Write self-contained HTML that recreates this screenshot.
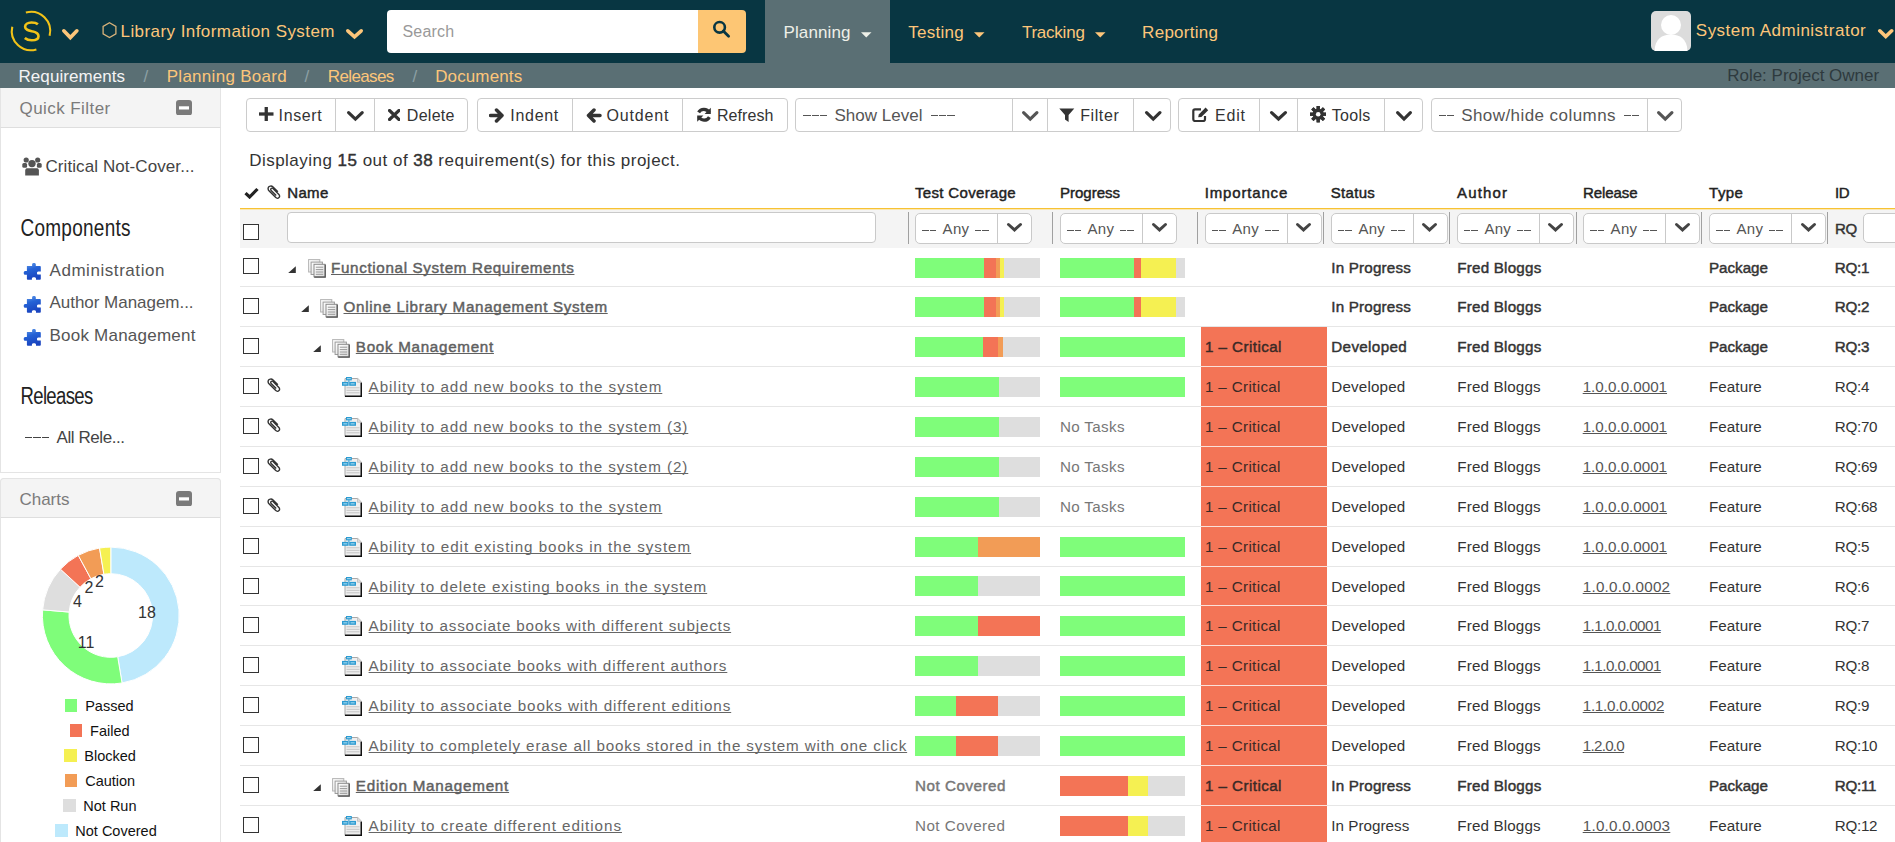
<!DOCTYPE html><html><head><meta charset="utf-8"><style>
html,body{margin:0;padding:0;}
body{width:1895px;height:842px;overflow:hidden;position:relative;background:#fff;font-family:"Liberation Sans",sans-serif;}
.a{position:absolute;display:block;}
.t{position:absolute;white-space:nowrap;line-height:1;}
.u{text-decoration:underline;text-underline-offset:1.3px;text-decoration-skip-ink:none;}
</style></head><body>

<div class="a" style="left:0.00px;top:0.00px;width:1895.00px;height:63.00px;background:#083642"></div>
<svg class="a" style="left:8.00px;top:8.00px" width="46" height="46" viewBox="0 0 46 46">
<path d="M 17.87 4.5 A 19.2 19.2 0 0 1 41.6 27.7" fill="none" stroke="#f2c318" stroke-width="2.1"/>
<path d="M 4.28 18.7 A 19.2 19.2 0 0 0 28.4 41.4" fill="none" stroke="#f2c318" stroke-width="2.1"/>
<path d="M 29.9 16.3 C 28.5 15 26 14.5 23.5 14.5 C 19.5 14.5 17.1 16.5 17.1 18.8 C 17.1 22 20.5 22.6 24 23.3 C 28 24 30.5 25 30.5 28.2 C 30.5 31 28 32.3 23.7 32.3 C 20.5 32.3 18.5 31.5 16.8 30" fill="none" stroke="#f2c318" stroke-width="2.6"/>
</svg>
<svg class="a" style="left:61.30px;top:27.50px" width="18.7" height="13.1" viewBox="0 0 18.7 13.1"><polyline points="2.80,2.80 9.35,9.56 15.90,2.80" fill="none" stroke="#fdc67a" stroke-width="3.60" stroke-linecap="round" stroke-linejoin="miter" stroke-miterlimit="3"/></svg>
<svg class="a" style="left:101.00px;top:21.00px" width="17" height="19" viewBox="0 0 17 19"><polygon points="8.5,1.7 14.9,5.4 14.9,12.8 8.5,16.5 2.1,12.8 2.1,5.4" fill="none" stroke="#d8b27a" stroke-width="1.3"/></svg>
<div class="t " style="left:120.50px;top:23.11px;font-size:17.00px;color:#fdc67a;letter-spacing:0.434px;">Library Information System</div>
<svg class="a" style="left:345.00px;top:28.00px" width="19" height="12.3" viewBox="0 0 19 12.3"><polyline points="2.80,2.80 9.50,8.76 16.20,2.80" fill="none" stroke="#fdc67a" stroke-width="3.60" stroke-linecap="round" stroke-linejoin="miter" stroke-miterlimit="3"/></svg>
<div class="a" style="left:387.00px;top:10.00px;width:311.00px;height:43.00px;background:#fff;border-radius:4px 0 0 4px"></div>
<div class="a" style="left:698.00px;top:10.00px;width:48.00px;height:43.00px;background:#fdc674;border-radius:0 4px 4px 0"></div>
<div class="t " style="left:402.50px;top:24.46px;font-size:16.00px;color:#999;letter-spacing:0.176px;">Search</div>
<svg class="a" style="left:711.00px;top:19.00px" width="22" height="21" viewBox="0 0 22 21"><circle cx="8.6" cy="8.3" r="5.3" fill="none" stroke="#083642" stroke-width="2.6"/><line x1="12.3" y1="12" x2="17.6" y2="17.3" stroke="#083642" stroke-width="2.8" stroke-linecap="round"/></svg>
<div class="a" style="left:765.00px;top:0.00px;width:125.00px;height:63.00px;background:#5a6f74"></div>
<div class="t " style="left:783.50px;top:24.11px;font-size:17.00px;color:#eef0e8;letter-spacing:0.124px;">Planning</div>
<svg class="a" style="left:860.50px;top:32.00px" width="11" height="6" viewBox="0 0 11 6"><polygon points="0,0.3 10.5,0.3 5.25,5.5" fill="#eef0e8"/></svg>
<div class="t " style="left:908.30px;top:24.11px;font-size:17.00px;color:#fdc67a;letter-spacing:0.268px;">Testing</div>
<svg class="a" style="left:973.50px;top:32.00px" width="11" height="6" viewBox="0 0 11 6"><polygon points="0,0.3 10.5,0.3 5.25,5.5" fill="#fdc67a"/></svg>
<div class="t " style="left:1021.90px;top:24.11px;font-size:17.00px;color:#fdc67a;letter-spacing:-0.229px;">Tracking</div>
<svg class="a" style="left:1094.50px;top:32.00px" width="11" height="6" viewBox="0 0 11 6"><polygon points="0,0.3 10.5,0.3 5.25,5.5" fill="#fdc67a"/></svg>
<div class="t " style="left:1142.10px;top:24.11px;font-size:17.00px;color:#fdc67a;letter-spacing:0.277px;">Reporting</div>
<svg class="a" style="left:1651.00px;top:11.00px" width="40" height="40" viewBox="0 0 40 40"><rect x="0" y="0" width="40" height="40" rx="5" fill="#dcdcdc"/><circle cx="20" cy="14" r="10" fill="#fff"/><path d="M 3.5 40 C 4 28 11 23.5 20 23.5 C 29 23.5 36 28 36.5 40 Z" fill="#fff"/></svg>
<div class="t " style="left:1695.80px;top:21.81px;font-size:17.00px;color:#fdc67a;letter-spacing:0.492px;">System Administrator</div>
<svg class="a" style="left:1876.50px;top:28.20px" width="17.5" height="12.1" viewBox="0 0 17.5 12.1"><polyline points="2.80,2.80 8.75,8.56 14.70,2.80" fill="none" stroke="#fdc67a" stroke-width="3.60" stroke-linecap="round" stroke-linejoin="miter" stroke-miterlimit="3"/></svg>
<div class="a" style="left:0.00px;top:63.00px;width:1895.00px;height:25.00px;background:#5a6f74"></div>
<div class="t " style="left:18.50px;top:67.61px;font-size:17.00px;color:#f4f4f4;letter-spacing:0.069px;">Requirements</div>
<div class="t " style="left:143.50px;top:67.61px;font-size:17.00px;color:#8da0a5;">/</div>
<div class="t " style="left:166.70px;top:67.61px;font-size:17.00px;color:#fdc67a;letter-spacing:0.286px;">Planning Board</div>
<div class="t " style="left:304.50px;top:67.61px;font-size:17.00px;color:#8da0a5;">/</div>
<div class="t " style="left:327.80px;top:67.61px;font-size:17.00px;color:#fdc67a;letter-spacing:-0.627px;">Releases</div>
<div class="t " style="left:412.50px;top:67.61px;font-size:17.00px;color:#8da0a5;">/</div>
<div class="t " style="left:435.20px;top:67.61px;font-size:17.00px;color:#fdc67a;letter-spacing:0.123px;">Documents</div>
<div class="t " style="left:1727.20px;top:67.31px;font-size:17.00px;color:#2e3a3e;letter-spacing:-0.008px;">Role: Project Owner</div>
<div class="a" style="left:0.00px;top:88.00px;width:219.00px;height:384.00px;border:1px solid #e4e4e4;border-top:none;box-sizing:content-box;background:#fff"></div>
<div class="a" style="left:0.00px;top:88.00px;width:221.00px;height:40.00px;background:#f4f4f4;border-bottom:1px solid #dedede;box-sizing:border-box;border-left:1px solid #e4e4e4;border-right:1px solid #e4e4e4"></div>
<div class="t " style="left:19.50px;top:99.61px;font-size:17.00px;color:#7b7b7b;letter-spacing:0.435px;">Quick Filter</div>
<svg class="a" style="left:176.00px;top:99.80px" width="16" height="15.5" viewBox="0 0 16 15.5"><rect x="0" y="0" width="16" height="15.5" rx="3" fill="#7a7a7a"/><rect x="3" y="6.3" width="10" height="3.2" fill="#fff"/></svg>
<svg class="a" style="left:21.00px;top:155.00px" width="22" height="22" viewBox="0 0 22 22"><g fill="#555">
<circle cx="5.2" cy="5" r="2.6"/><circle cx="16.7" cy="5" r="2.6"/>
<rect x="1.3" y="7.9" width="4.8" height="4.8" rx="1.5"/><rect x="15.9" y="7.9" width="4.8" height="4.8" rx="1.5"/>
<circle cx="11" cy="8.6" r="3.7"/>
<path d="M 4.2 20.6 L 4.2 15.5 C 4.2 13.9 5.2 13.3 6.8 13.3 L 15.3 13.3 C 16.9 13.3 17.9 13.9 17.9 15.5 L 17.9 20.6 Z"/>
</g></svg>
<div class="t " style="left:45.50px;top:158.31px;font-size:17.00px;color:#444;letter-spacing:0.081px;">Critical Not-Cover...</div>
<div class="t " style="left:20.50px;top:219.92px;font-size:19.00px;color:#222;letter-spacing:0.252px;transform:scaleY(1.22);transform-origin:0 16.08px;">Components</div>
<svg class="a" style="left:22.50px;top:262.00px" width="20" height="20" viewBox="0 0 20 20"><defs><linearGradient id="pg" x1="0" y1="0" x2="0.3" y2="1"><stop offset="0" stop-color="#6aa0ea"/><stop offset="0.45" stop-color="#2563d6"/><stop offset="1" stop-color="#1a45c0"/></linearGradient></defs>
<path fill="url(#pg)" d="M 3.9 3.9 L 9.1 3.9 L 9.1 2.2 C 9.1 0.6 12.8 0.6 12.8 2.2 L 12.8 3.9 L 16.9 3.9 C 17.5 3.9 17.8 4.2 17.8 4.8 L 17.8 9.4 L 15.2 9.4 C 13.6 9.4 13.6 12.6 15.2 12.6 L 17.8 12.6 L 17.8 17 C 17.8 17.6 17.5 17.8 16.9 17.8 L 13 17.8 L 13 16.5 C 13 14.8 8.9 14.8 8.9 16.5 L 8.9 17.8 L 4.8 17.8 C 4.2 17.8 3.9 17.6 3.9 17 L 3.9 12.8 L 2.2 12.8 C 0.2 12.8 0.2 9 2.2 9 L 3.9 9 Z"/></svg>
<div class="t " style="left:49.50px;top:261.61px;font-size:17.00px;color:#555;letter-spacing:0.555px;">Administration</div>
<svg class="a" style="left:22.50px;top:295.00px" width="20" height="20" viewBox="0 0 20 20"><defs><linearGradient id="pg" x1="0" y1="0" x2="0.3" y2="1"><stop offset="0" stop-color="#6aa0ea"/><stop offset="0.45" stop-color="#2563d6"/><stop offset="1" stop-color="#1a45c0"/></linearGradient></defs>
<path fill="url(#pg)" d="M 3.9 3.9 L 9.1 3.9 L 9.1 2.2 C 9.1 0.6 12.8 0.6 12.8 2.2 L 12.8 3.9 L 16.9 3.9 C 17.5 3.9 17.8 4.2 17.8 4.8 L 17.8 9.4 L 15.2 9.4 C 13.6 9.4 13.6 12.6 15.2 12.6 L 17.8 12.6 L 17.8 17 C 17.8 17.6 17.5 17.8 16.9 17.8 L 13 17.8 L 13 16.5 C 13 14.8 8.9 14.8 8.9 16.5 L 8.9 17.8 L 4.8 17.8 C 4.2 17.8 3.9 17.6 3.9 17 L 3.9 12.8 L 2.2 12.8 C 0.2 12.8 0.2 9 2.2 9 L 3.9 9 Z"/></svg>
<div class="t " style="left:49.50px;top:294.31px;font-size:17.00px;color:#555;letter-spacing:-0.031px;">Author Managem...</div>
<svg class="a" style="left:22.50px;top:328.00px" width="20" height="20" viewBox="0 0 20 20"><defs><linearGradient id="pg" x1="0" y1="0" x2="0.3" y2="1"><stop offset="0" stop-color="#6aa0ea"/><stop offset="0.45" stop-color="#2563d6"/><stop offset="1" stop-color="#1a45c0"/></linearGradient></defs>
<path fill="url(#pg)" d="M 3.9 3.9 L 9.1 3.9 L 9.1 2.2 C 9.1 0.6 12.8 0.6 12.8 2.2 L 12.8 3.9 L 16.9 3.9 C 17.5 3.9 17.8 4.2 17.8 4.8 L 17.8 9.4 L 15.2 9.4 C 13.6 9.4 13.6 12.6 15.2 12.6 L 17.8 12.6 L 17.8 17 C 17.8 17.6 17.5 17.8 16.9 17.8 L 13 17.8 L 13 16.5 C 13 14.8 8.9 14.8 8.9 16.5 L 8.9 17.8 L 4.8 17.8 C 4.2 17.8 3.9 17.6 3.9 17 L 3.9 12.8 L 2.2 12.8 C 0.2 12.8 0.2 9 2.2 9 L 3.9 9 Z"/></svg>
<div class="t " style="left:49.50px;top:327.21px;font-size:17.00px;color:#555;letter-spacing:0.229px;">Book Management</div>
<div class="t " style="left:20.50px;top:388.54px;font-size:18.50px;color:#222;letter-spacing:-0.635px;transform:scaleY(1.25);transform-origin:0 15.66px;">Releases</div>
<div class="a" style="left:24.70px;top:436.80px;width:7.57px;height:1.40px;background:#444"></div>
<div class="a" style="left:33.27px;top:436.80px;width:7.57px;height:1.40px;background:#444"></div>
<div class="a" style="left:41.83px;top:436.80px;width:7.57px;height:1.40px;background:#444"></div>
<div class="t " style="left:56.50px;top:428.61px;font-size:17.00px;color:#444;letter-spacing:-0.426px;">All Rele...</div>
<div class="a" style="left:0.00px;top:478.00px;width:219.00px;height:400.00px;border:1px solid #e4e4e4;box-sizing:content-box;background:#fff;border-radius:4px 4px 0 0"></div>
<div class="a" style="left:0.00px;top:478.00px;width:221.00px;height:40.00px;background:#f4f4f4;box-sizing:border-box;border:1px solid #e4e4e4;border-bottom-color:#dedede;border-radius:4px 4px 0 0"></div>
<div class="t " style="left:19.50px;top:491.01px;font-size:17.00px;color:#7b7b7b;letter-spacing:-0.030px;">Charts</div>
<svg class="a" style="left:176.00px;top:490.70px" width="16" height="15.5" viewBox="0 0 16 15.5"><rect x="0" y="0" width="16" height="15.5" rx="3" fill="#7a7a7a"/><rect x="3" y="6.3" width="10" height="3.2" fill="#fff"/></svg>
<svg class="a" style="left:0;top:0" width="221" height="842" viewBox="0 0 221 842"><path d="M 110.80 547.10 A 68.4 68.4 0 0 1 122.06 682.97 L 117.68 656.73 A 41.8 41.8 0 0 0 110.80 573.70 Z" fill="#bde9fc" stroke="#fff" stroke-width="1"/><path d="M 122.06 682.97 A 68.4 68.4 0 0 1 42.63 609.85 L 69.14 612.05 A 41.8 41.8 0 0 0 117.68 656.73 Z" fill="#7ffd7a" stroke="#fff" stroke-width="1"/><path d="M 42.63 609.85 A 68.4 68.4 0 0 1 60.48 569.17 L 80.05 587.19 A 41.8 41.8 0 0 0 69.14 612.05 Z" fill="#dedede" stroke="#fff" stroke-width="1"/><path d="M 60.48 569.17 A 68.4 68.4 0 0 1 78.25 555.34 L 90.91 578.74 A 41.8 41.8 0 0 0 80.05 587.19 Z" fill="#f37456" stroke="#fff" stroke-width="1"/><path d="M 78.25 555.34 A 68.4 68.4 0 0 1 99.54 548.03 L 103.92 574.27 A 41.8 41.8 0 0 0 90.91 578.74 Z" fill="#f29c56" stroke="#fff" stroke-width="1"/><path d="M 99.54 548.03 A 68.4 68.4 0 0 1 110.80 547.10 L 110.80 573.70 A 41.8 41.8 0 0 0 103.92 574.27 Z" fill="#f5f052" stroke="#fff" stroke-width="1"/></svg>
<div class="t " style="left:138.00px;top:605.26px;font-size:16.00px;color:#333;">18</div>
<div class="t " style="left:77.70px;top:634.66px;font-size:16.00px;color:#333;">11</div>
<div class="t " style="left:73.05px;top:594.26px;font-size:16.00px;color:#333;">4</div>
<div class="t " style="left:84.55px;top:580.06px;font-size:16.00px;color:#333;">2</div>
<div class="t " style="left:94.95px;top:574.26px;font-size:16.00px;color:#333;">2</div>
<div class="a" style="left:64.90px;top:699.00px;width:12.50px;height:12.50px;background:#7ffd7a"></div>
<div class="t " style="left:85.20px;top:699.43px;font-size:14.50px;color:#111;">Passed</div>
<div class="a" style="left:69.80px;top:724.00px;width:12.50px;height:12.50px;background:#f37456"></div>
<div class="t " style="left:90.10px;top:724.43px;font-size:14.50px;color:#111;">Failed</div>
<div class="a" style="left:64.00px;top:749.00px;width:12.50px;height:12.50px;background:#f5f052"></div>
<div class="t " style="left:84.30px;top:749.43px;font-size:14.50px;color:#111;">Blocked</div>
<div class="a" style="left:64.90px;top:774.00px;width:12.50px;height:12.50px;background:#f29c56"></div>
<div class="t " style="left:85.20px;top:774.43px;font-size:14.50px;color:#111;">Caution</div>
<div class="a" style="left:63.00px;top:799.00px;width:12.50px;height:12.50px;background:#dedede"></div>
<div class="t " style="left:83.30px;top:799.43px;font-size:14.50px;color:#111;">Not Run</div>
<div class="a" style="left:55.00px;top:824.00px;width:12.50px;height:12.50px;background:#bde9fc"></div>
<div class="t " style="left:75.30px;top:824.43px;font-size:14.50px;color:#111;">Not Covered</div>
<div class="a" style="left:246.30px;top:98.00px;width:222.20px;height:34.00px;border:1px solid #cccccc;border-radius:4px;box-sizing:border-box;background:#fff"></div>
<div class="a" style="left:335.20px;top:98.00px;width:1.00px;height:34.00px;background:#cccccc"></div>
<div class="a" style="left:373.90px;top:98.00px;width:1.00px;height:34.00px;background:#cccccc"></div>
<div class="a" style="left:476.50px;top:98.00px;width:311.00px;height:34.00px;border:1px solid #cccccc;border-radius:4px;box-sizing:border-box;background:#fff"></div>
<div class="a" style="left:571.70px;top:98.00px;width:1.00px;height:34.00px;background:#cccccc"></div>
<div class="a" style="left:681.70px;top:98.00px;width:1.00px;height:34.00px;background:#cccccc"></div>
<div class="a" style="left:795.30px;top:98.00px;width:376.20px;height:34.00px;border:1px solid #cccccc;border-radius:4px;box-sizing:border-box;background:#fff"></div>
<div class="a" style="left:1012.00px;top:98.00px;width:1.00px;height:34.00px;background:#cccccc"></div>
<div class="a" style="left:1046.50px;top:98.00px;width:1.00px;height:34.00px;background:#cccccc"></div>
<div class="a" style="left:1133.00px;top:98.00px;width:1.00px;height:34.00px;background:#cccccc"></div>
<div class="a" style="left:1178.40px;top:98.00px;width:245.00px;height:34.00px;border:1px solid #cccccc;border-radius:4px;box-sizing:border-box;background:#fff"></div>
<div class="a" style="left:1259.00px;top:98.00px;width:1.00px;height:34.00px;background:#cccccc"></div>
<div class="a" style="left:1297.00px;top:98.00px;width:1.00px;height:34.00px;background:#cccccc"></div>
<div class="a" style="left:1384.00px;top:98.00px;width:1.00px;height:34.00px;background:#cccccc"></div>
<div class="a" style="left:1430.70px;top:98.00px;width:251.70px;height:34.00px;border:1px solid #cccccc;border-radius:4px;box-sizing:border-box;background:#fff"></div>
<div class="a" style="left:1647.00px;top:98.00px;width:1.00px;height:34.00px;background:#cccccc"></div>
<svg class="a" style="left:259.10px;top:106.90px" width="14.5" height="14" viewBox="0 0 14.5 14"><rect x="5.6" y="0" width="3.3" height="14" fill="#333"/><rect x="0" y="5.35" width="14.5" height="3.3" fill="#333"/></svg>
<div class="t " style="left:278.60px;top:108.46px;font-size:16.00px;color:#333;letter-spacing:0.600px;">Insert</div>
<svg class="a" style="left:346.10px;top:109.80px" width="18.8" height="12.3" viewBox="0 0 18.8 12.3"><polyline points="2.60,2.60 9.40,9.04 16.20,2.60" fill="none" stroke="#333" stroke-width="3.20" stroke-linecap="round" stroke-linejoin="miter" stroke-miterlimit="3"/></svg>
<svg class="a" style="left:387.80px;top:109.00px" width="12.5" height="12" viewBox="0 0 12.5 12"><path d="M1.5 1.5 L11 10.5 M11 1.5 L1.5 10.5" stroke="#333" stroke-width="3.2" stroke-linecap="round"/></svg>
<div class="t " style="left:406.80px;top:108.46px;font-size:16.00px;color:#333;letter-spacing:0.292px;">Delete</div>
<svg class="a" style="left:489.00px;top:107.50px" width="15.5" height="15" viewBox="0 0 15.5 15"><path d="M1.5 7.5 L13 7.5 M7.5 2 L13 7.5 L7.5 13" fill="none" stroke="#333" stroke-width="3.5" stroke-linecap="round" stroke-linejoin="round"/></svg>
<div class="t " style="left:510.30px;top:108.46px;font-size:16.00px;color:#333;letter-spacing:0.704px;">Indent</div>
<svg class="a" style="left:586.00px;top:107.50px" width="15.5" height="15" viewBox="0 0 15.5 15"><path d="M14 7.5 L2.5 7.5 M8 2 L2.5 7.5 L8 13" fill="none" stroke="#333" stroke-width="3.5" stroke-linecap="round" stroke-linejoin="round"/></svg>
<div class="t " style="left:606.50px;top:108.46px;font-size:16.00px;color:#333;letter-spacing:0.840px;">Outdent</div>
<svg class="a" style="left:695.60px;top:106.50px" width="16" height="15.5" viewBox="0 0 16 15.5"><path d="M13.2 5.6 A 6 6 0 0 0 2.6 5.4" fill="none" stroke="#333" stroke-width="3.2"/><path d="M14.8 0.8 L14.8 7 L8.6 7 Z" fill="#333"/><path d="M2.8 9.9 A 6 6 0 0 0 13.4 10.1" fill="none" stroke="#333" stroke-width="3.2"/><path d="M1.2 14.7 L1.2 8.5 L7.4 8.5 Z" fill="#333"/></svg>
<div class="t " style="left:716.90px;top:108.46px;font-size:16.00px;color:#333;letter-spacing:0.100px;">Refresh</div>
<div class="a" style="left:803.30px;top:115.05px;width:7.30px;height:1.30px;background:#555"></div>
<div class="a" style="left:811.60px;top:115.05px;width:7.30px;height:1.30px;background:#555"></div>
<div class="a" style="left:819.90px;top:115.05px;width:7.30px;height:1.30px;background:#555"></div>
<div class="t " style="left:834.50px;top:106.61px;font-size:17.00px;color:#555;letter-spacing:0.012px;">Show Level</div>
<div class="a" style="left:930.80px;top:115.05px;width:7.33px;height:1.30px;background:#555"></div>
<div class="a" style="left:939.13px;top:115.05px;width:7.33px;height:1.30px;background:#555"></div>
<div class="a" style="left:947.47px;top:115.05px;width:7.33px;height:1.30px;background:#555"></div>
<svg class="a" style="left:1021.00px;top:110.00px" width="18.5" height="12.3" viewBox="0 0 18.5 12.3"><polyline points="2.60,2.60 9.25,9.04 15.90,2.60" fill="none" stroke="#555" stroke-width="3.20" stroke-linecap="round" stroke-linejoin="miter" stroke-miterlimit="3"/></svg>
<svg class="a" style="left:1059.40px;top:107.50px" width="15.6" height="14.5" viewBox="0 0 15.6 14.5"><path d="M0.3 0.5 L15.3 0.5 L9.6 7 L9.6 14 L6 11.5 L6 7 Z" fill="#333"/></svg>
<div class="t " style="left:1080.20px;top:108.46px;font-size:16.00px;color:#333;letter-spacing:0.596px;">Filter</div>
<svg class="a" style="left:1143.50px;top:110.00px" width="18.5" height="12.3" viewBox="0 0 18.5 12.3"><polyline points="2.60,2.60 9.25,9.04 15.90,2.60" fill="none" stroke="#333" stroke-width="3.20" stroke-linecap="round" stroke-linejoin="miter" stroke-miterlimit="3"/></svg>
<svg class="a" style="left:1191.80px;top:106.50px" width="18.5" height="15" viewBox="0 0 18.5 15"><path d="M9 2.3 L3 2.3 C2 2.3 1.3 3 1.3 4 L1.3 12.3 C1.3 13.3 2 14 3 14 L11.3 14 C12.3 14 13 13.3 13 12.3 L13 9" fill="none" stroke="#333" stroke-width="2.2"/><path d="M6.2 10.2 L6.8 7.4 L13.6 0.6 L16.2 3.2 L9.4 10 Z" fill="#333"/></svg>
<div class="t " style="left:1215.10px;top:108.46px;font-size:16.00px;color:#333;letter-spacing:0.773px;">Edit</div>
<svg class="a" style="left:1269.00px;top:110.00px" width="19" height="12.3" viewBox="0 0 19 12.3"><polyline points="2.60,2.60 9.50,9.04 16.40,2.60" fill="none" stroke="#333" stroke-width="3.20" stroke-linecap="round" stroke-linejoin="miter" stroke-miterlimit="3"/></svg>
<svg class="a" style="left:1309.90px;top:106.30px" width="16.4" height="16.4" viewBox="0 0 16.4 16.4"><rect x="6.6" y="0" width="3.2" height="16.4" fill="#333" transform="rotate(0 8.2 8.2)"/><rect x="6.6" y="0" width="3.2" height="16.4" fill="#333" transform="rotate(45 8.2 8.2)"/><rect x="6.6" y="0" width="3.2" height="16.4" fill="#333" transform="rotate(90 8.2 8.2)"/><rect x="6.6" y="0" width="3.2" height="16.4" fill="#333" transform="rotate(135 8.2 8.2)"/><rect x="6.6" y="0" width="3.2" height="16.4" fill="#333" transform="rotate(180 8.2 8.2)"/><rect x="6.6" y="0" width="3.2" height="16.4" fill="#333" transform="rotate(225 8.2 8.2)"/><rect x="6.6" y="0" width="3.2" height="16.4" fill="#333" transform="rotate(270 8.2 8.2)"/><rect x="6.6" y="0" width="3.2" height="16.4" fill="#333" transform="rotate(315 8.2 8.2)"/><circle cx="8.2" cy="8.2" r="5.6" fill="#333"/><circle cx="8.2" cy="8.2" r="2.3" fill="#fff"/></svg>
<div class="t " style="left:1331.70px;top:108.46px;font-size:16.00px;color:#333;letter-spacing:0.330px;">Tools</div>
<svg class="a" style="left:1395.00px;top:110.00px" width="18" height="12.3" viewBox="0 0 18 12.3"><polyline points="2.60,2.60 9.00,9.04 15.40,2.60" fill="none" stroke="#333" stroke-width="3.20" stroke-linecap="round" stroke-linejoin="miter" stroke-miterlimit="3"/></svg>
<div class="a" style="left:1438.50px;top:114.95px;width:7.35px;height:1.30px;background:#555"></div>
<div class="a" style="left:1446.85px;top:114.95px;width:7.35px;height:1.30px;background:#555"></div>
<div class="t " style="left:1461.20px;top:106.61px;font-size:17.00px;color:#555;letter-spacing:0.432px;">Show/hide columns</div>
<div class="a" style="left:1623.90px;top:114.95px;width:7.30px;height:1.30px;background:#555"></div>
<div class="a" style="left:1632.20px;top:114.95px;width:7.30px;height:1.30px;background:#555"></div>
<svg class="a" style="left:1656.00px;top:110.00px" width="18.5" height="12.3" viewBox="0 0 18.5 12.3"><polyline points="2.60,2.60 9.25,9.04 15.90,2.60" fill="none" stroke="#555" stroke-width="3.20" stroke-linecap="round" stroke-linejoin="miter" stroke-miterlimit="3"/></svg>
<div class="t" style="left:249.2px;top:152.01px;font-size:17px;color:#333;letter-spacing:0.479px"><span style="">Displaying </span><span style="-webkit-text-stroke:0.45px #333">15</span><span style=""> out of </span><span style="-webkit-text-stroke:0.45px #333">38</span><span style=""> requirement(s) for this project.</span></div>
<svg class="a" style="left:244.00px;top:186.50px" width="15" height="12" viewBox="0 0 15 12"><path d="M1.5 6.2 L5.6 10 L13.5 2" fill="none" stroke="#222" stroke-width="3.2"/></svg>
<svg class="a" style="left:266.70px;top:185.40px" width="14" height="14" viewBox="0 0 14 14"><path d="M 10.3 5.6 L 5.2 0.5 C 3.9 -0.7 1.4 -0.2 0.8 1.2 C 0.2 2.5 0.7 3.9 1.6 4.8 L 8.2 11.4 C 9 12.2 10.5 12.3 11.4 11.4 C 12.3 10.5 12.1 9.1 11.3 8.3 L 5.4 2.4 C 4.8 1.8 4 1.9 3.5 2.4 C 3 2.9 3 3.7 3.5 4.2 L 8.6 9.3" fill="none" stroke="#333" stroke-width="1.40" transform="translate(0.6,1.2)"/></svg>
<div class="t " style="left:287.30px;top:185.30px;font-size:15.00px;color:#222;-webkit-text-stroke:0.45px #222;letter-spacing:0.317px;">Name</div>
<div class="t " style="left:915.00px;top:185.30px;font-size:15.00px;color:#222;-webkit-text-stroke:0.45px #222;letter-spacing:0.329px;">Test Coverage</div>
<div class="t " style="left:1059.90px;top:185.30px;font-size:15.00px;color:#222;-webkit-text-stroke:0.45px #222;letter-spacing:0.029px;">Progress</div>
<div class="t " style="left:1204.80px;top:185.30px;font-size:15.00px;color:#222;-webkit-text-stroke:0.45px #222;letter-spacing:0.822px;">Importance</div>
<div class="t " style="left:1330.80px;top:185.30px;font-size:15.00px;color:#222;-webkit-text-stroke:0.45px #222;letter-spacing:0.310px;">Status</div>
<div class="t " style="left:1457.10px;top:185.30px;font-size:15.00px;color:#222;-webkit-text-stroke:0.45px #222;letter-spacing:1.150px;">Author</div>
<div class="t " style="left:1582.90px;top:185.30px;font-size:15.00px;color:#222;-webkit-text-stroke:0.45px #222;letter-spacing:-0.042px;">Release</div>
<div class="t " style="left:1709.10px;top:185.30px;font-size:15.00px;color:#222;-webkit-text-stroke:0.45px #222;letter-spacing:0.450px;">Type</div>
<div class="t " style="left:1834.90px;top:185.30px;font-size:15.00px;color:#222;-webkit-text-stroke:0.45px #222;letter-spacing:-0.300px;">ID</div>
<div class="a" style="left:240.00px;top:208.00px;width:1655.00px;height:1.00px;background:#f7c233"></div>
<div class="a" style="left:240.00px;top:209.00px;width:1655.00px;height:1.00px;background:#fbe7b0"></div>
<div class="a" style="left:240.00px;top:209.50px;width:1655.00px;height:38.50px;background:#f4f4f4"></div>
<div class="a" style="left:243.00px;top:224.00px;width:16.00px;height:16.00px;border:1px solid #333;box-sizing:border-box;background:#fff"></div>
<div class="a" style="left:287.20px;top:212.00px;width:588.50px;height:31.30px;border:1px solid #c9c9c9;border-radius:4px;box-sizing:border-box;background:#fff"></div>
<div class="a" style="left:907.50px;top:212.00px;width:1.00px;height:31.50px;background:#a0a0a0"></div>
<div class="a" style="left:915.10px;top:213.00px;width:117.00px;height:31.00px;border:1px solid #c9c9c9;border-radius:5px;box-sizing:border-box;background:#fff"></div>
<div class="a" style="left:997.20px;top:213.00px;width:1.00px;height:31.00px;background:#c9c9c9"></div>
<div class="a" style="left:922.30px;top:230.00px;width:6.35px;height:1.20px;background:#555"></div>
<div class="a" style="left:929.65px;top:230.00px;width:6.35px;height:1.20px;background:#555"></div>
<div class="t " style="left:942.60px;top:221.30px;font-size:15.00px;color:#555;letter-spacing:0.300px;">Any</div>
<div class="a" style="left:974.90px;top:230.00px;width:6.55px;height:1.20px;background:#555"></div>
<div class="a" style="left:982.45px;top:230.00px;width:6.55px;height:1.20px;background:#555"></div>
<svg class="a" style="left:1005.60px;top:221.50px" width="17" height="11" viewBox="0 0 17 11"><polyline points="2.50,2.50 8.50,7.88 14.50,2.50" fill="none" stroke="#444" stroke-width="3.00" stroke-linecap="round" stroke-linejoin="miter" stroke-miterlimit="3"/></svg>
<div class="a" style="left:1051.50px;top:212.00px;width:1.00px;height:31.50px;background:#a0a0a0"></div>
<div class="a" style="left:1060.00px;top:213.00px;width:117.00px;height:31.00px;border:1px solid #c9c9c9;border-radius:5px;box-sizing:border-box;background:#fff"></div>
<div class="a" style="left:1142.10px;top:213.00px;width:1.00px;height:31.00px;background:#c9c9c9"></div>
<div class="a" style="left:1067.20px;top:230.00px;width:6.35px;height:1.20px;background:#555"></div>
<div class="a" style="left:1074.55px;top:230.00px;width:6.35px;height:1.20px;background:#555"></div>
<div class="t " style="left:1087.50px;top:221.30px;font-size:15.00px;color:#555;letter-spacing:0.300px;">Any</div>
<div class="a" style="left:1119.80px;top:230.00px;width:6.55px;height:1.20px;background:#555"></div>
<div class="a" style="left:1127.35px;top:230.00px;width:6.55px;height:1.20px;background:#555"></div>
<svg class="a" style="left:1150.50px;top:221.50px" width="17" height="11" viewBox="0 0 17 11"><polyline points="2.50,2.50 8.50,7.88 14.50,2.50" fill="none" stroke="#444" stroke-width="3.00" stroke-linecap="round" stroke-linejoin="miter" stroke-miterlimit="3"/></svg>
<div class="a" style="left:1196.50px;top:212.00px;width:1.00px;height:31.50px;background:#a0a0a0"></div>
<div class="a" style="left:1204.80px;top:213.00px;width:117.00px;height:31.00px;border:1px solid #c9c9c9;border-radius:5px;box-sizing:border-box;background:#fff"></div>
<div class="a" style="left:1286.90px;top:213.00px;width:1.00px;height:31.00px;background:#c9c9c9"></div>
<div class="a" style="left:1212.00px;top:230.00px;width:6.35px;height:1.20px;background:#555"></div>
<div class="a" style="left:1219.35px;top:230.00px;width:6.35px;height:1.20px;background:#555"></div>
<div class="t " style="left:1232.30px;top:221.30px;font-size:15.00px;color:#555;letter-spacing:0.300px;">Any</div>
<div class="a" style="left:1264.60px;top:230.00px;width:6.55px;height:1.20px;background:#555"></div>
<div class="a" style="left:1272.15px;top:230.00px;width:6.55px;height:1.20px;background:#555"></div>
<svg class="a" style="left:1295.30px;top:221.50px" width="17" height="11" viewBox="0 0 17 11"><polyline points="2.50,2.50 8.50,7.88 14.50,2.50" fill="none" stroke="#444" stroke-width="3.00" stroke-linecap="round" stroke-linejoin="miter" stroke-miterlimit="3"/></svg>
<div class="a" style="left:1322.50px;top:212.00px;width:1.00px;height:31.50px;background:#a0a0a0"></div>
<div class="a" style="left:1330.90px;top:213.00px;width:117.00px;height:31.00px;border:1px solid #c9c9c9;border-radius:5px;box-sizing:border-box;background:#fff"></div>
<div class="a" style="left:1413.00px;top:213.00px;width:1.00px;height:31.00px;background:#c9c9c9"></div>
<div class="a" style="left:1338.10px;top:230.00px;width:6.35px;height:1.20px;background:#555"></div>
<div class="a" style="left:1345.45px;top:230.00px;width:6.35px;height:1.20px;background:#555"></div>
<div class="t " style="left:1358.40px;top:221.30px;font-size:15.00px;color:#555;letter-spacing:0.300px;">Any</div>
<div class="a" style="left:1390.70px;top:230.00px;width:6.55px;height:1.20px;background:#555"></div>
<div class="a" style="left:1398.25px;top:230.00px;width:6.55px;height:1.20px;background:#555"></div>
<svg class="a" style="left:1421.40px;top:221.50px" width="17" height="11" viewBox="0 0 17 11"><polyline points="2.50,2.50 8.50,7.88 14.50,2.50" fill="none" stroke="#444" stroke-width="3.00" stroke-linecap="round" stroke-linejoin="miter" stroke-miterlimit="3"/></svg>
<div class="a" style="left:1448.50px;top:212.00px;width:1.00px;height:31.50px;background:#a0a0a0"></div>
<div class="a" style="left:1456.90px;top:213.00px;width:117.00px;height:31.00px;border:1px solid #c9c9c9;border-radius:5px;box-sizing:border-box;background:#fff"></div>
<div class="a" style="left:1539.00px;top:213.00px;width:1.00px;height:31.00px;background:#c9c9c9"></div>
<div class="a" style="left:1464.10px;top:230.00px;width:6.35px;height:1.20px;background:#555"></div>
<div class="a" style="left:1471.45px;top:230.00px;width:6.35px;height:1.20px;background:#555"></div>
<div class="t " style="left:1484.40px;top:221.30px;font-size:15.00px;color:#555;letter-spacing:0.300px;">Any</div>
<div class="a" style="left:1516.70px;top:230.00px;width:6.55px;height:1.20px;background:#555"></div>
<div class="a" style="left:1524.25px;top:230.00px;width:6.55px;height:1.20px;background:#555"></div>
<svg class="a" style="left:1547.40px;top:221.50px" width="17" height="11" viewBox="0 0 17 11"><polyline points="2.50,2.50 8.50,7.88 14.50,2.50" fill="none" stroke="#444" stroke-width="3.00" stroke-linecap="round" stroke-linejoin="miter" stroke-miterlimit="3"/></svg>
<div class="a" style="left:1575.50px;top:212.00px;width:1.00px;height:31.50px;background:#a0a0a0"></div>
<div class="a" style="left:1583.10px;top:213.00px;width:117.00px;height:31.00px;border:1px solid #c9c9c9;border-radius:5px;box-sizing:border-box;background:#fff"></div>
<div class="a" style="left:1665.20px;top:213.00px;width:1.00px;height:31.00px;background:#c9c9c9"></div>
<div class="a" style="left:1590.30px;top:230.00px;width:6.35px;height:1.20px;background:#555"></div>
<div class="a" style="left:1597.65px;top:230.00px;width:6.35px;height:1.20px;background:#555"></div>
<div class="t " style="left:1610.60px;top:221.30px;font-size:15.00px;color:#555;letter-spacing:0.300px;">Any</div>
<div class="a" style="left:1642.90px;top:230.00px;width:6.55px;height:1.20px;background:#555"></div>
<div class="a" style="left:1650.45px;top:230.00px;width:6.55px;height:1.20px;background:#555"></div>
<svg class="a" style="left:1673.60px;top:221.50px" width="17" height="11" viewBox="0 0 17 11"><polyline points="2.50,2.50 8.50,7.88 14.50,2.50" fill="none" stroke="#444" stroke-width="3.00" stroke-linecap="round" stroke-linejoin="miter" stroke-miterlimit="3"/></svg>
<div class="a" style="left:1700.50px;top:212.00px;width:1.00px;height:31.50px;background:#a0a0a0"></div>
<div class="a" style="left:1709.00px;top:213.00px;width:117.00px;height:31.00px;border:1px solid #c9c9c9;border-radius:5px;box-sizing:border-box;background:#fff"></div>
<div class="a" style="left:1791.10px;top:213.00px;width:1.00px;height:31.00px;background:#c9c9c9"></div>
<div class="a" style="left:1716.20px;top:230.00px;width:6.35px;height:1.20px;background:#555"></div>
<div class="a" style="left:1723.55px;top:230.00px;width:6.35px;height:1.20px;background:#555"></div>
<div class="t " style="left:1736.50px;top:221.30px;font-size:15.00px;color:#555;letter-spacing:0.300px;">Any</div>
<div class="a" style="left:1768.80px;top:230.00px;width:6.55px;height:1.20px;background:#555"></div>
<div class="a" style="left:1776.35px;top:230.00px;width:6.55px;height:1.20px;background:#555"></div>
<svg class="a" style="left:1799.50px;top:221.50px" width="17" height="11" viewBox="0 0 17 11"><polyline points="2.50,2.50 8.50,7.88 14.50,2.50" fill="none" stroke="#444" stroke-width="3.00" stroke-linecap="round" stroke-linejoin="miter" stroke-miterlimit="3"/></svg>
<div class="a" style="left:1826.50px;top:212.00px;width:1.00px;height:31.50px;background:#a0a0a0"></div>
<div class="t " style="left:1835.00px;top:220.80px;font-size:15.00px;color:#333;-webkit-text-stroke:0.45px #333;letter-spacing:-0.300px;">RQ</div>
<div class="a" style="left:1862.60px;top:213.00px;width:60.00px;height:30.00px;border:1px solid #c9c9c9;border-radius:5px;box-sizing:border-box;background:#fff"></div>
<div class="a" style="left:240.00px;top:286.00px;width:1655.00px;height:1.00px;background:#e6e6e6"></div>
<div class="a" style="left:243.00px;top:258.00px;width:16.00px;height:16.00px;border:1px solid #333;box-sizing:border-box;background:#fff"></div>
<svg class="a" style="left:288.10px;top:265.50px" width="8" height="7.2" viewBox="0 0 8 7.2"><polygon points="0.2,7 7.8,7 7.8,0.2" fill="#333"/></svg>
<svg class="a" style="left:307.50px;top:259.00px" width="19" height="20" viewBox="0 0 19 20"><defs><linearGradient id="dg" x1="0" y1="0" x2="1" y2="1"><stop offset="0" stop-color="#ffffff"/><stop offset="1" stop-color="#dcdcdc"/></linearGradient></defs><rect x="0.6" y="0.6" width="11.2" height="12.4" fill="url(#dg)" stroke="#b4b4b4" stroke-width="1"/><rect x="3.1" y="3.1" width="11.3" height="12.4" fill="url(#dg)" stroke="#9c9c9c" stroke-width="1"/><rect x="6" y="5.3" width="10.9" height="12.5" fill="url(#dg)" stroke="#8a8a8a" stroke-width="1"/><path d="M 6.2 18.1 L 17.3 18.1 L 17.3 5.6" fill="none" stroke="#505050" stroke-width="1.1"/><g stroke="#8f8f8f" stroke-width="0.9"><line x1="7.8" y1="8.2" x2="15.2" y2="8.2"/><line x1="7.8" y1="10.6" x2="15.2" y2="10.6"/><line x1="7.8" y1="13" x2="15.2" y2="13"/><line x1="7.8" y1="15.3" x2="15.2" y2="15.3"/></g></svg>
<div class="t u" style="left:331.00px;top:260.33px;font-size:15.20px;color:#606060;-webkit-text-stroke:0.45px #606060;letter-spacing:0.659px;">Functional System Requirements</div>
<div class="a" style="left:915.00px;top:257.50px;width:69.00px;height:20.00px;background:#7ffd7a"></div>
<div class="a" style="left:984.00px;top:257.50px;width:12.00px;height:20.00px;background:#f37456"></div>
<div class="a" style="left:996.00px;top:257.50px;width:4.00px;height:20.00px;background:#f29c56"></div>
<div class="a" style="left:1000.00px;top:257.50px;width:4.00px;height:20.00px;background:#f5f052"></div>
<div class="a" style="left:1004.00px;top:257.50px;width:36.00px;height:20.00px;background:#dedede"></div>
<div class="a" style="left:1060.00px;top:257.50px;width:74.00px;height:20.00px;background:#7ffd7a"></div>
<div class="a" style="left:1134.00px;top:257.50px;width:7.00px;height:20.00px;background:#f37456"></div>
<div class="a" style="left:1141.00px;top:257.50px;width:35.00px;height:20.00px;background:#f5f052"></div>
<div class="a" style="left:1176.00px;top:257.50px;width:9.00px;height:20.00px;background:#dedede"></div>
<div class="t " style="left:1331.30px;top:260.33px;font-size:15.20px;color:#333;-webkit-text-stroke:0.45px #333;letter-spacing:0.183px;">In Progress</div>
<div class="t " style="left:1457.30px;top:260.33px;font-size:15.20px;color:#333;-webkit-text-stroke:0.45px #333;letter-spacing:0.207px;">Fred Bloggs</div>
<div class="t " style="left:1709.00px;top:260.33px;font-size:15.20px;color:#333;-webkit-text-stroke:0.45px #333;letter-spacing:-0.021px;">Package</div>
<div class="t " style="left:1834.80px;top:260.33px;font-size:15.20px;color:#333;-webkit-text-stroke:0.45px #333;letter-spacing:-0.300px;">RQ:1</div>
<div class="a" style="left:240.00px;top:326.00px;width:1655.00px;height:1.00px;background:#e6e6e6"></div>
<div class="a" style="left:243.00px;top:298.00px;width:16.00px;height:16.00px;border:1px solid #333;box-sizing:border-box;background:#fff"></div>
<svg class="a" style="left:300.60px;top:304.50px" width="8" height="7.2" viewBox="0 0 8 7.2"><polygon points="0.2,7 7.8,7 7.8,0.2" fill="#333"/></svg>
<svg class="a" style="left:320.00px;top:299.00px" width="19" height="20" viewBox="0 0 19 20"><defs><linearGradient id="dg" x1="0" y1="0" x2="1" y2="1"><stop offset="0" stop-color="#ffffff"/><stop offset="1" stop-color="#dcdcdc"/></linearGradient></defs><rect x="0.6" y="0.6" width="11.2" height="12.4" fill="url(#dg)" stroke="#b4b4b4" stroke-width="1"/><rect x="3.1" y="3.1" width="11.3" height="12.4" fill="url(#dg)" stroke="#9c9c9c" stroke-width="1"/><rect x="6" y="5.3" width="10.9" height="12.5" fill="url(#dg)" stroke="#8a8a8a" stroke-width="1"/><path d="M 6.2 18.1 L 17.3 18.1 L 17.3 5.6" fill="none" stroke="#505050" stroke-width="1.1"/><g stroke="#8f8f8f" stroke-width="0.9"><line x1="7.8" y1="8.2" x2="15.2" y2="8.2"/><line x1="7.8" y1="10.6" x2="15.2" y2="10.6"/><line x1="7.8" y1="13" x2="15.2" y2="13"/><line x1="7.8" y1="15.3" x2="15.2" y2="15.3"/></g></svg>
<div class="t u" style="left:343.50px;top:299.33px;font-size:15.20px;color:#606060;-webkit-text-stroke:0.45px #606060;letter-spacing:0.686px;">Online Library Management System</div>
<div class="a" style="left:915.00px;top:296.50px;width:69.00px;height:20.00px;background:#7ffd7a"></div>
<div class="a" style="left:984.00px;top:296.50px;width:12.00px;height:20.00px;background:#f37456"></div>
<div class="a" style="left:996.00px;top:296.50px;width:4.00px;height:20.00px;background:#f29c56"></div>
<div class="a" style="left:1000.00px;top:296.50px;width:4.00px;height:20.00px;background:#f5f052"></div>
<div class="a" style="left:1004.00px;top:296.50px;width:36.00px;height:20.00px;background:#dedede"></div>
<div class="a" style="left:1060.00px;top:296.50px;width:74.00px;height:20.00px;background:#7ffd7a"></div>
<div class="a" style="left:1134.00px;top:296.50px;width:7.00px;height:20.00px;background:#f37456"></div>
<div class="a" style="left:1141.00px;top:296.50px;width:35.00px;height:20.00px;background:#f5f052"></div>
<div class="a" style="left:1176.00px;top:296.50px;width:9.00px;height:20.00px;background:#dedede"></div>
<div class="t " style="left:1331.30px;top:299.33px;font-size:15.20px;color:#333;-webkit-text-stroke:0.45px #333;letter-spacing:0.183px;">In Progress</div>
<div class="t " style="left:1457.30px;top:299.33px;font-size:15.20px;color:#333;-webkit-text-stroke:0.45px #333;letter-spacing:0.207px;">Fred Bloggs</div>
<div class="t " style="left:1709.00px;top:299.33px;font-size:15.20px;color:#333;-webkit-text-stroke:0.45px #333;letter-spacing:-0.021px;">Package</div>
<div class="t " style="left:1834.80px;top:299.33px;font-size:15.20px;color:#333;-webkit-text-stroke:0.45px #333;letter-spacing:-0.300px;">RQ:2</div>
<div class="a" style="left:240.00px;top:366.00px;width:1655.00px;height:1.00px;background:#e6e6e6"></div>
<div class="a" style="left:1201.00px;top:327.00px;width:126.00px;height:39.00px;background:#f37456"></div>
<div class="a" style="left:1201.00px;top:366.00px;width:126.00px;height:1.00px;background:#fbe0d9"></div>
<div class="a" style="left:243.00px;top:338.00px;width:16.00px;height:16.00px;border:1px solid #333;box-sizing:border-box;background:#fff"></div>
<svg class="a" style="left:312.90px;top:344.50px" width="8" height="7.2" viewBox="0 0 8 7.2"><polygon points="0.2,7 7.8,7 7.8,0.2" fill="#333"/></svg>
<svg class="a" style="left:332.30px;top:339.00px" width="19" height="20" viewBox="0 0 19 20"><defs><linearGradient id="dg" x1="0" y1="0" x2="1" y2="1"><stop offset="0" stop-color="#ffffff"/><stop offset="1" stop-color="#dcdcdc"/></linearGradient></defs><rect x="0.6" y="0.6" width="11.2" height="12.4" fill="url(#dg)" stroke="#b4b4b4" stroke-width="1"/><rect x="3.1" y="3.1" width="11.3" height="12.4" fill="url(#dg)" stroke="#9c9c9c" stroke-width="1"/><rect x="6" y="5.3" width="10.9" height="12.5" fill="url(#dg)" stroke="#8a8a8a" stroke-width="1"/><path d="M 6.2 18.1 L 17.3 18.1 L 17.3 5.6" fill="none" stroke="#505050" stroke-width="1.1"/><g stroke="#8f8f8f" stroke-width="0.9"><line x1="7.8" y1="8.2" x2="15.2" y2="8.2"/><line x1="7.8" y1="10.6" x2="15.2" y2="10.6"/><line x1="7.8" y1="13" x2="15.2" y2="13"/><line x1="7.8" y1="15.3" x2="15.2" y2="15.3"/></g></svg>
<div class="t u" style="left:355.80px;top:339.33px;font-size:15.20px;color:#606060;-webkit-text-stroke:0.45px #606060;letter-spacing:0.709px;">Book Management</div>
<div class="a" style="left:915.00px;top:336.50px;width:68.00px;height:20.00px;background:#7ffd7a"></div>
<div class="a" style="left:983.00px;top:336.50px;width:14.70px;height:20.00px;background:#f37456"></div>
<div class="a" style="left:997.70px;top:336.50px;width:5.10px;height:20.00px;background:#f29c56"></div>
<div class="a" style="left:1002.80px;top:336.50px;width:37.20px;height:20.00px;background:#dedede"></div>
<div class="a" style="left:1060.00px;top:336.50px;width:125.00px;height:20.00px;background:#7ffd7a"></div>
<div class="t " style="left:1205.00px;top:339.33px;font-size:15.20px;color:#3a2a26;-webkit-text-stroke:0.45px #3a2a26;letter-spacing:0.432px;">1 – Critical</div>
<div class="t " style="left:1331.30px;top:339.33px;font-size:15.20px;color:#333;-webkit-text-stroke:0.45px #333;letter-spacing:0.343px;">Developed</div>
<div class="t " style="left:1457.30px;top:339.33px;font-size:15.20px;color:#333;-webkit-text-stroke:0.45px #333;letter-spacing:0.207px;">Fred Bloggs</div>
<div class="t " style="left:1709.00px;top:339.33px;font-size:15.20px;color:#333;-webkit-text-stroke:0.45px #333;letter-spacing:-0.021px;">Package</div>
<div class="t " style="left:1834.80px;top:339.33px;font-size:15.20px;color:#333;-webkit-text-stroke:0.45px #333;letter-spacing:-0.300px;">RQ:3</div>
<div class="a" style="left:240.00px;top:406.00px;width:1655.00px;height:1.00px;background:#e6e6e6"></div>
<div class="a" style="left:1201.00px;top:367.00px;width:126.00px;height:39.00px;background:#f37456"></div>
<div class="a" style="left:1201.00px;top:406.00px;width:126.00px;height:1.00px;background:#fbe0d9"></div>
<div class="a" style="left:243.00px;top:378.00px;width:16.00px;height:16.00px;border:1px solid #333;box-sizing:border-box;background:#fff"></div>
<svg class="a" style="left:266.60px;top:378.00px" width="14" height="14" viewBox="0 0 14 14"><path d="M 10.3 5.6 L 5.2 0.5 C 3.9 -0.7 1.4 -0.2 0.8 1.2 C 0.2 2.5 0.7 3.9 1.6 4.8 L 8.2 11.4 C 9 12.2 10.5 12.3 11.4 11.4 C 12.3 10.5 12.1 9.1 11.3 8.3 L 5.4 2.4 C 4.8 1.8 4 1.9 3.5 2.4 C 3 2.9 3 3.7 3.5 4.2 L 8.6 9.3" fill="none" stroke="#333" stroke-width="1.40" transform="translate(0.6,1.2)"/></svg>
<svg class="a" style="left:342.00px;top:377.00px" width="20" height="20" viewBox="0 0 20 20"><path d="M 3 1.5 L 15.8 1.5 L 19.5 5.2 L 19.5 19.5 L 3 19.5 Z" fill="#efefef" stroke="#a8a8a8" stroke-width="1"/><path d="M 15.5 1.5 L 15.5 5.3 L 19.3 5.3" fill="#ddd" stroke="#bbb" stroke-width="0.8"/><path d="M 3 19.2 L 19.3 19.2 L 19.3 5.8" fill="none" stroke="#111" stroke-width="1.6"/><g stroke="#c4c4c4" stroke-width="1"><line x1="4.5" y1="10.8" x2="17.5" y2="10.8"/><line x1="4.5" y1="13.3" x2="17.5" y2="13.3"/><line x1="4.5" y1="15.8" x2="17.5" y2="15.8"/></g><g fill="#2b9bd2"><rect x="4" y="0" width="5.8" height="3.4"/><rect x="6.4" y="3.2" width="1" height="1.9"/><rect x="0" y="4.9" width="6.6" height="3.9"/><rect x="7.2" y="4.9" width="6.8" height="3.9"/></g><g fill="#a6daf0"><rect x="5" y="1.1" width="3.8" height="1.1"/><rect x="1.3" y="6.3" width="4" height="1.1"/><rect x="8.6" y="6.3" width="4" height="1.1"/></g></svg>
<div class="t u" style="left:368.60px;top:379.33px;font-size:15.20px;color:#666;letter-spacing:0.931px;">Ability to add new books to the system</div>
<div class="a" style="left:915.00px;top:376.50px;width:84.00px;height:20.00px;background:#7ffd7a"></div>
<div class="a" style="left:999.00px;top:376.50px;width:41.00px;height:20.00px;background:#dedede"></div>
<div class="a" style="left:1060.00px;top:376.50px;width:125.00px;height:20.00px;background:#7ffd7a"></div>
<div class="t " style="left:1205.00px;top:379.33px;font-size:15.20px;color:#3a2a26;letter-spacing:0.341px;">1 – Critical</div>
<div class="t " style="left:1331.30px;top:379.33px;font-size:15.20px;color:#333;letter-spacing:0.168px;">Developed</div>
<div class="t " style="left:1457.30px;top:379.33px;font-size:15.20px;color:#333;letter-spacing:0.147px;">Fred Bloggs</div>
<div class="t " style="left:1709.00px;top:379.33px;font-size:15.20px;color:#333;letter-spacing:0.060px;">Feature</div>
<div class="t " style="left:1834.80px;top:379.33px;font-size:15.20px;color:#333;letter-spacing:-0.300px;">RQ:4</div>
<div class="t u" style="left:1582.70px;top:379.33px;font-size:15.20px;color:#555;letter-spacing:-0.010px;">1.0.0.0.0001</div>
<div class="a" style="left:240.00px;top:446.00px;width:1655.00px;height:1.00px;background:#e6e6e6"></div>
<div class="a" style="left:1201.00px;top:407.00px;width:126.00px;height:39.00px;background:#f37456"></div>
<div class="a" style="left:1201.00px;top:446.00px;width:126.00px;height:1.00px;background:#fbe0d9"></div>
<div class="a" style="left:243.00px;top:418.00px;width:16.00px;height:16.00px;border:1px solid #333;box-sizing:border-box;background:#fff"></div>
<svg class="a" style="left:266.60px;top:418.00px" width="14" height="14" viewBox="0 0 14 14"><path d="M 10.3 5.6 L 5.2 0.5 C 3.9 -0.7 1.4 -0.2 0.8 1.2 C 0.2 2.5 0.7 3.9 1.6 4.8 L 8.2 11.4 C 9 12.2 10.5 12.3 11.4 11.4 C 12.3 10.5 12.1 9.1 11.3 8.3 L 5.4 2.4 C 4.8 1.8 4 1.9 3.5 2.4 C 3 2.9 3 3.7 3.5 4.2 L 8.6 9.3" fill="none" stroke="#333" stroke-width="1.40" transform="translate(0.6,1.2)"/></svg>
<svg class="a" style="left:342.00px;top:417.00px" width="20" height="20" viewBox="0 0 20 20"><path d="M 3 1.5 L 15.8 1.5 L 19.5 5.2 L 19.5 19.5 L 3 19.5 Z" fill="#efefef" stroke="#a8a8a8" stroke-width="1"/><path d="M 15.5 1.5 L 15.5 5.3 L 19.3 5.3" fill="#ddd" stroke="#bbb" stroke-width="0.8"/><path d="M 3 19.2 L 19.3 19.2 L 19.3 5.8" fill="none" stroke="#111" stroke-width="1.6"/><g stroke="#c4c4c4" stroke-width="1"><line x1="4.5" y1="10.8" x2="17.5" y2="10.8"/><line x1="4.5" y1="13.3" x2="17.5" y2="13.3"/><line x1="4.5" y1="15.8" x2="17.5" y2="15.8"/></g><g fill="#2b9bd2"><rect x="4" y="0" width="5.8" height="3.4"/><rect x="6.4" y="3.2" width="1" height="1.9"/><rect x="0" y="4.9" width="6.6" height="3.9"/><rect x="7.2" y="4.9" width="6.8" height="3.9"/></g><g fill="#a6daf0"><rect x="5" y="1.1" width="3.8" height="1.1"/><rect x="1.3" y="6.3" width="4" height="1.1"/><rect x="8.6" y="6.3" width="4" height="1.1"/></g></svg>
<div class="t u" style="left:368.60px;top:419.33px;font-size:15.20px;color:#666;letter-spacing:0.918px;">Ability to add new books to the system (3)</div>
<div class="a" style="left:915.00px;top:416.50px;width:84.00px;height:20.00px;background:#7ffd7a"></div>
<div class="a" style="left:999.00px;top:416.50px;width:41.00px;height:20.00px;background:#dedede"></div>
<div class="t " style="left:1060.00px;top:419.33px;font-size:15.20px;color:#777;letter-spacing:0.333px;">No Tasks</div>
<div class="t " style="left:1205.00px;top:419.33px;font-size:15.20px;color:#3a2a26;letter-spacing:0.341px;">1 – Critical</div>
<div class="t " style="left:1331.30px;top:419.33px;font-size:15.20px;color:#333;letter-spacing:0.168px;">Developed</div>
<div class="t " style="left:1457.30px;top:419.33px;font-size:15.20px;color:#333;letter-spacing:0.147px;">Fred Bloggs</div>
<div class="t " style="left:1709.00px;top:419.33px;font-size:15.20px;color:#333;letter-spacing:0.060px;">Feature</div>
<div class="t " style="left:1834.80px;top:419.33px;font-size:15.20px;color:#333;letter-spacing:-0.300px;">RQ:70</div>
<div class="t u" style="left:1582.70px;top:419.33px;font-size:15.20px;color:#555;letter-spacing:-0.010px;">1.0.0.0.0001</div>
<div class="a" style="left:240.00px;top:486.00px;width:1655.00px;height:1.00px;background:#e6e6e6"></div>
<div class="a" style="left:1201.00px;top:447.00px;width:126.00px;height:39.00px;background:#f37456"></div>
<div class="a" style="left:1201.00px;top:486.00px;width:126.00px;height:1.00px;background:#fbe0d9"></div>
<div class="a" style="left:243.00px;top:458.00px;width:16.00px;height:16.00px;border:1px solid #333;box-sizing:border-box;background:#fff"></div>
<svg class="a" style="left:266.60px;top:458.00px" width="14" height="14" viewBox="0 0 14 14"><path d="M 10.3 5.6 L 5.2 0.5 C 3.9 -0.7 1.4 -0.2 0.8 1.2 C 0.2 2.5 0.7 3.9 1.6 4.8 L 8.2 11.4 C 9 12.2 10.5 12.3 11.4 11.4 C 12.3 10.5 12.1 9.1 11.3 8.3 L 5.4 2.4 C 4.8 1.8 4 1.9 3.5 2.4 C 3 2.9 3 3.7 3.5 4.2 L 8.6 9.3" fill="none" stroke="#333" stroke-width="1.40" transform="translate(0.6,1.2)"/></svg>
<svg class="a" style="left:342.00px;top:457.00px" width="20" height="20" viewBox="0 0 20 20"><path d="M 3 1.5 L 15.8 1.5 L 19.5 5.2 L 19.5 19.5 L 3 19.5 Z" fill="#efefef" stroke="#a8a8a8" stroke-width="1"/><path d="M 15.5 1.5 L 15.5 5.3 L 19.3 5.3" fill="#ddd" stroke="#bbb" stroke-width="0.8"/><path d="M 3 19.2 L 19.3 19.2 L 19.3 5.8" fill="none" stroke="#111" stroke-width="1.6"/><g stroke="#c4c4c4" stroke-width="1"><line x1="4.5" y1="10.8" x2="17.5" y2="10.8"/><line x1="4.5" y1="13.3" x2="17.5" y2="13.3"/><line x1="4.5" y1="15.8" x2="17.5" y2="15.8"/></g><g fill="#2b9bd2"><rect x="4" y="0" width="5.8" height="3.4"/><rect x="6.4" y="3.2" width="1" height="1.9"/><rect x="0" y="4.9" width="6.6" height="3.9"/><rect x="7.2" y="4.9" width="6.8" height="3.9"/></g><g fill="#a6daf0"><rect x="5" y="1.1" width="3.8" height="1.1"/><rect x="1.3" y="6.3" width="4" height="1.1"/><rect x="8.6" y="6.3" width="4" height="1.1"/></g></svg>
<div class="t u" style="left:368.60px;top:459.33px;font-size:15.20px;color:#666;letter-spacing:0.918px;">Ability to add new books to the system (2)</div>
<div class="a" style="left:915.00px;top:456.50px;width:84.00px;height:20.00px;background:#7ffd7a"></div>
<div class="a" style="left:999.00px;top:456.50px;width:41.00px;height:20.00px;background:#dedede"></div>
<div class="t " style="left:1060.00px;top:459.33px;font-size:15.20px;color:#777;letter-spacing:0.333px;">No Tasks</div>
<div class="t " style="left:1205.00px;top:459.33px;font-size:15.20px;color:#3a2a26;letter-spacing:0.341px;">1 – Critical</div>
<div class="t " style="left:1331.30px;top:459.33px;font-size:15.20px;color:#333;letter-spacing:0.168px;">Developed</div>
<div class="t " style="left:1457.30px;top:459.33px;font-size:15.20px;color:#333;letter-spacing:0.147px;">Fred Bloggs</div>
<div class="t " style="left:1709.00px;top:459.33px;font-size:15.20px;color:#333;letter-spacing:0.060px;">Feature</div>
<div class="t " style="left:1834.80px;top:459.33px;font-size:15.20px;color:#333;letter-spacing:-0.300px;">RQ:69</div>
<div class="t u" style="left:1582.70px;top:459.33px;font-size:15.20px;color:#555;letter-spacing:-0.010px;">1.0.0.0.0001</div>
<div class="a" style="left:240.00px;top:526.00px;width:1655.00px;height:1.00px;background:#e6e6e6"></div>
<div class="a" style="left:1201.00px;top:487.00px;width:126.00px;height:39.00px;background:#f37456"></div>
<div class="a" style="left:1201.00px;top:526.00px;width:126.00px;height:1.00px;background:#fbe0d9"></div>
<div class="a" style="left:243.00px;top:498.00px;width:16.00px;height:16.00px;border:1px solid #333;box-sizing:border-box;background:#fff"></div>
<svg class="a" style="left:266.60px;top:498.00px" width="14" height="14" viewBox="0 0 14 14"><path d="M 10.3 5.6 L 5.2 0.5 C 3.9 -0.7 1.4 -0.2 0.8 1.2 C 0.2 2.5 0.7 3.9 1.6 4.8 L 8.2 11.4 C 9 12.2 10.5 12.3 11.4 11.4 C 12.3 10.5 12.1 9.1 11.3 8.3 L 5.4 2.4 C 4.8 1.8 4 1.9 3.5 2.4 C 3 2.9 3 3.7 3.5 4.2 L 8.6 9.3" fill="none" stroke="#333" stroke-width="1.40" transform="translate(0.6,1.2)"/></svg>
<svg class="a" style="left:342.00px;top:497.00px" width="20" height="20" viewBox="0 0 20 20"><path d="M 3 1.5 L 15.8 1.5 L 19.5 5.2 L 19.5 19.5 L 3 19.5 Z" fill="#efefef" stroke="#a8a8a8" stroke-width="1"/><path d="M 15.5 1.5 L 15.5 5.3 L 19.3 5.3" fill="#ddd" stroke="#bbb" stroke-width="0.8"/><path d="M 3 19.2 L 19.3 19.2 L 19.3 5.8" fill="none" stroke="#111" stroke-width="1.6"/><g stroke="#c4c4c4" stroke-width="1"><line x1="4.5" y1="10.8" x2="17.5" y2="10.8"/><line x1="4.5" y1="13.3" x2="17.5" y2="13.3"/><line x1="4.5" y1="15.8" x2="17.5" y2="15.8"/></g><g fill="#2b9bd2"><rect x="4" y="0" width="5.8" height="3.4"/><rect x="6.4" y="3.2" width="1" height="1.9"/><rect x="0" y="4.9" width="6.6" height="3.9"/><rect x="7.2" y="4.9" width="6.8" height="3.9"/></g><g fill="#a6daf0"><rect x="5" y="1.1" width="3.8" height="1.1"/><rect x="1.3" y="6.3" width="4" height="1.1"/><rect x="8.6" y="6.3" width="4" height="1.1"/></g></svg>
<div class="t u" style="left:368.60px;top:499.33px;font-size:15.20px;color:#666;letter-spacing:0.931px;">Ability to add new books to the system</div>
<div class="a" style="left:915.00px;top:496.50px;width:84.00px;height:20.00px;background:#7ffd7a"></div>
<div class="a" style="left:999.00px;top:496.50px;width:41.00px;height:20.00px;background:#dedede"></div>
<div class="t " style="left:1060.00px;top:499.33px;font-size:15.20px;color:#777;letter-spacing:0.333px;">No Tasks</div>
<div class="t " style="left:1205.00px;top:499.33px;font-size:15.20px;color:#3a2a26;letter-spacing:0.341px;">1 – Critical</div>
<div class="t " style="left:1331.30px;top:499.33px;font-size:15.20px;color:#333;letter-spacing:0.168px;">Developed</div>
<div class="t " style="left:1457.30px;top:499.33px;font-size:15.20px;color:#333;letter-spacing:0.147px;">Fred Bloggs</div>
<div class="t " style="left:1709.00px;top:499.33px;font-size:15.20px;color:#333;letter-spacing:0.060px;">Feature</div>
<div class="t " style="left:1834.80px;top:499.33px;font-size:15.20px;color:#333;letter-spacing:-0.300px;">RQ:68</div>
<div class="t u" style="left:1582.70px;top:499.33px;font-size:15.20px;color:#555;letter-spacing:-0.010px;">1.0.0.0.0001</div>
<div class="a" style="left:240.00px;top:566.00px;width:1655.00px;height:1.00px;background:#e6e6e6"></div>
<div class="a" style="left:1201.00px;top:527.00px;width:126.00px;height:39.00px;background:#f37456"></div>
<div class="a" style="left:1201.00px;top:566.00px;width:126.00px;height:1.00px;background:#fbe0d9"></div>
<div class="a" style="left:243.00px;top:538.00px;width:16.00px;height:16.00px;border:1px solid #333;box-sizing:border-box;background:#fff"></div>
<svg class="a" style="left:342.00px;top:537.00px" width="20" height="20" viewBox="0 0 20 20"><path d="M 3 1.5 L 15.8 1.5 L 19.5 5.2 L 19.5 19.5 L 3 19.5 Z" fill="#efefef" stroke="#a8a8a8" stroke-width="1"/><path d="M 15.5 1.5 L 15.5 5.3 L 19.3 5.3" fill="#ddd" stroke="#bbb" stroke-width="0.8"/><path d="M 3 19.2 L 19.3 19.2 L 19.3 5.8" fill="none" stroke="#111" stroke-width="1.6"/><g stroke="#c4c4c4" stroke-width="1"><line x1="4.5" y1="10.8" x2="17.5" y2="10.8"/><line x1="4.5" y1="13.3" x2="17.5" y2="13.3"/><line x1="4.5" y1="15.8" x2="17.5" y2="15.8"/></g><g fill="#2b9bd2"><rect x="4" y="0" width="5.8" height="3.4"/><rect x="6.4" y="3.2" width="1" height="1.9"/><rect x="0" y="4.9" width="6.6" height="3.9"/><rect x="7.2" y="4.9" width="6.8" height="3.9"/></g><g fill="#a6daf0"><rect x="5" y="1.1" width="3.8" height="1.1"/><rect x="1.3" y="6.3" width="4" height="1.1"/><rect x="8.6" y="6.3" width="4" height="1.1"/></g></svg>
<div class="t u" style="left:368.60px;top:539.33px;font-size:15.20px;color:#666;letter-spacing:0.960px;">Ability to edit existing books in the system</div>
<div class="a" style="left:915.00px;top:536.50px;width:63.00px;height:20.00px;background:#7ffd7a"></div>
<div class="a" style="left:978.00px;top:536.50px;width:62.00px;height:20.00px;background:#f29c56"></div>
<div class="a" style="left:1060.00px;top:536.50px;width:125.00px;height:20.00px;background:#7ffd7a"></div>
<div class="t " style="left:1205.00px;top:539.33px;font-size:15.20px;color:#3a2a26;letter-spacing:0.341px;">1 – Critical</div>
<div class="t " style="left:1331.30px;top:539.33px;font-size:15.20px;color:#333;letter-spacing:0.168px;">Developed</div>
<div class="t " style="left:1457.30px;top:539.33px;font-size:15.20px;color:#333;letter-spacing:0.147px;">Fred Bloggs</div>
<div class="t " style="left:1709.00px;top:539.33px;font-size:15.20px;color:#333;letter-spacing:0.060px;">Feature</div>
<div class="t " style="left:1834.80px;top:539.33px;font-size:15.20px;color:#333;letter-spacing:-0.300px;">RQ:5</div>
<div class="t u" style="left:1582.70px;top:539.33px;font-size:15.20px;color:#555;letter-spacing:-0.010px;">1.0.0.0.0001</div>
<div class="a" style="left:240.00px;top:605.00px;width:1655.00px;height:1.00px;background:#e6e6e6"></div>
<div class="a" style="left:1201.00px;top:567.00px;width:126.00px;height:38.00px;background:#f37456"></div>
<div class="a" style="left:1201.00px;top:605.00px;width:126.00px;height:1.00px;background:#fbe0d9"></div>
<div class="a" style="left:243.00px;top:577.50px;width:16.00px;height:16.00px;border:1px solid #333;box-sizing:border-box;background:#fff"></div>
<svg class="a" style="left:342.00px;top:576.50px" width="20" height="20" viewBox="0 0 20 20"><path d="M 3 1.5 L 15.8 1.5 L 19.5 5.2 L 19.5 19.5 L 3 19.5 Z" fill="#efefef" stroke="#a8a8a8" stroke-width="1"/><path d="M 15.5 1.5 L 15.5 5.3 L 19.3 5.3" fill="#ddd" stroke="#bbb" stroke-width="0.8"/><path d="M 3 19.2 L 19.3 19.2 L 19.3 5.8" fill="none" stroke="#111" stroke-width="1.6"/><g stroke="#c4c4c4" stroke-width="1"><line x1="4.5" y1="10.8" x2="17.5" y2="10.8"/><line x1="4.5" y1="13.3" x2="17.5" y2="13.3"/><line x1="4.5" y1="15.8" x2="17.5" y2="15.8"/></g><g fill="#2b9bd2"><rect x="4" y="0" width="5.8" height="3.4"/><rect x="6.4" y="3.2" width="1" height="1.9"/><rect x="0" y="4.9" width="6.6" height="3.9"/><rect x="7.2" y="4.9" width="6.8" height="3.9"/></g><g fill="#a6daf0"><rect x="5" y="1.1" width="3.8" height="1.1"/><rect x="1.3" y="6.3" width="4" height="1.1"/><rect x="8.6" y="6.3" width="4" height="1.1"/></g></svg>
<div class="t u" style="left:368.60px;top:578.83px;font-size:15.20px;color:#666;letter-spacing:0.900px;">Ability to delete existing books in the system</div>
<div class="a" style="left:915.00px;top:576.00px;width:63.00px;height:20.00px;background:#7ffd7a"></div>
<div class="a" style="left:978.00px;top:576.00px;width:62.00px;height:20.00px;background:#dedede"></div>
<div class="a" style="left:1060.00px;top:576.00px;width:125.00px;height:20.00px;background:#7ffd7a"></div>
<div class="t " style="left:1205.00px;top:578.83px;font-size:15.20px;color:#3a2a26;letter-spacing:0.341px;">1 – Critical</div>
<div class="t " style="left:1331.30px;top:578.83px;font-size:15.20px;color:#333;letter-spacing:0.168px;">Developed</div>
<div class="t " style="left:1457.30px;top:578.83px;font-size:15.20px;color:#333;letter-spacing:0.147px;">Fred Bloggs</div>
<div class="t " style="left:1709.00px;top:578.83px;font-size:15.20px;color:#333;letter-spacing:0.060px;">Feature</div>
<div class="t " style="left:1834.80px;top:578.83px;font-size:15.20px;color:#333;letter-spacing:-0.300px;">RQ:6</div>
<div class="t u" style="left:1582.70px;top:578.83px;font-size:15.20px;color:#555;letter-spacing:0.263px;">1.0.0.0.0002</div>
<div class="a" style="left:240.00px;top:645.00px;width:1655.00px;height:1.00px;background:#e6e6e6"></div>
<div class="a" style="left:1201.00px;top:606.00px;width:126.00px;height:39.00px;background:#f37456"></div>
<div class="a" style="left:1201.00px;top:645.00px;width:126.00px;height:1.00px;background:#fbe0d9"></div>
<div class="a" style="left:243.00px;top:617.00px;width:16.00px;height:16.00px;border:1px solid #333;box-sizing:border-box;background:#fff"></div>
<svg class="a" style="left:342.00px;top:616.00px" width="20" height="20" viewBox="0 0 20 20"><path d="M 3 1.5 L 15.8 1.5 L 19.5 5.2 L 19.5 19.5 L 3 19.5 Z" fill="#efefef" stroke="#a8a8a8" stroke-width="1"/><path d="M 15.5 1.5 L 15.5 5.3 L 19.3 5.3" fill="#ddd" stroke="#bbb" stroke-width="0.8"/><path d="M 3 19.2 L 19.3 19.2 L 19.3 5.8" fill="none" stroke="#111" stroke-width="1.6"/><g stroke="#c4c4c4" stroke-width="1"><line x1="4.5" y1="10.8" x2="17.5" y2="10.8"/><line x1="4.5" y1="13.3" x2="17.5" y2="13.3"/><line x1="4.5" y1="15.8" x2="17.5" y2="15.8"/></g><g fill="#2b9bd2"><rect x="4" y="0" width="5.8" height="3.4"/><rect x="6.4" y="3.2" width="1" height="1.9"/><rect x="0" y="4.9" width="6.6" height="3.9"/><rect x="7.2" y="4.9" width="6.8" height="3.9"/></g><g fill="#a6daf0"><rect x="5" y="1.1" width="3.8" height="1.1"/><rect x="1.3" y="6.3" width="4" height="1.1"/><rect x="8.6" y="6.3" width="4" height="1.1"/></g></svg>
<div class="t u" style="left:368.60px;top:618.33px;font-size:15.20px;color:#666;letter-spacing:0.840px;">Ability to associate books with different subjects</div>
<div class="a" style="left:915.00px;top:615.50px;width:63.00px;height:20.00px;background:#7ffd7a"></div>
<div class="a" style="left:978.00px;top:615.50px;width:62.00px;height:20.00px;background:#f37456"></div>
<div class="a" style="left:1060.00px;top:615.50px;width:125.00px;height:20.00px;background:#7ffd7a"></div>
<div class="t " style="left:1205.00px;top:618.33px;font-size:15.20px;color:#3a2a26;letter-spacing:0.341px;">1 – Critical</div>
<div class="t " style="left:1331.30px;top:618.33px;font-size:15.20px;color:#333;letter-spacing:0.168px;">Developed</div>
<div class="t " style="left:1457.30px;top:618.33px;font-size:15.20px;color:#333;letter-spacing:0.147px;">Fred Bloggs</div>
<div class="t " style="left:1709.00px;top:618.33px;font-size:15.20px;color:#333;letter-spacing:0.060px;">Feature</div>
<div class="t " style="left:1834.80px;top:618.33px;font-size:15.20px;color:#333;letter-spacing:-0.300px;">RQ:7</div>
<div class="t u" style="left:1582.70px;top:618.33px;font-size:15.20px;color:#555;letter-spacing:-0.528px;">1.1.0.0.0001</div>
<div class="a" style="left:240.00px;top:685.00px;width:1655.00px;height:1.00px;background:#e6e6e6"></div>
<div class="a" style="left:1201.00px;top:646.00px;width:126.00px;height:39.00px;background:#f37456"></div>
<div class="a" style="left:1201.00px;top:685.00px;width:126.00px;height:1.00px;background:#fbe0d9"></div>
<div class="a" style="left:243.00px;top:657.00px;width:16.00px;height:16.00px;border:1px solid #333;box-sizing:border-box;background:#fff"></div>
<svg class="a" style="left:342.00px;top:656.00px" width="20" height="20" viewBox="0 0 20 20"><path d="M 3 1.5 L 15.8 1.5 L 19.5 5.2 L 19.5 19.5 L 3 19.5 Z" fill="#efefef" stroke="#a8a8a8" stroke-width="1"/><path d="M 15.5 1.5 L 15.5 5.3 L 19.3 5.3" fill="#ddd" stroke="#bbb" stroke-width="0.8"/><path d="M 3 19.2 L 19.3 19.2 L 19.3 5.8" fill="none" stroke="#111" stroke-width="1.6"/><g stroke="#c4c4c4" stroke-width="1"><line x1="4.5" y1="10.8" x2="17.5" y2="10.8"/><line x1="4.5" y1="13.3" x2="17.5" y2="13.3"/><line x1="4.5" y1="15.8" x2="17.5" y2="15.8"/></g><g fill="#2b9bd2"><rect x="4" y="0" width="5.8" height="3.4"/><rect x="6.4" y="3.2" width="1" height="1.9"/><rect x="0" y="4.9" width="6.6" height="3.9"/><rect x="7.2" y="4.9" width="6.8" height="3.9"/></g><g fill="#a6daf0"><rect x="5" y="1.1" width="3.8" height="1.1"/><rect x="1.3" y="6.3" width="4" height="1.1"/><rect x="8.6" y="6.3" width="4" height="1.1"/></g></svg>
<div class="t u" style="left:368.60px;top:658.33px;font-size:15.20px;color:#666;letter-spacing:0.883px;">Ability to associate books with different authors</div>
<div class="a" style="left:915.00px;top:655.50px;width:63.00px;height:20.00px;background:#7ffd7a"></div>
<div class="a" style="left:978.00px;top:655.50px;width:62.00px;height:20.00px;background:#dedede"></div>
<div class="a" style="left:1060.00px;top:655.50px;width:125.00px;height:20.00px;background:#7ffd7a"></div>
<div class="t " style="left:1205.00px;top:658.33px;font-size:15.20px;color:#3a2a26;letter-spacing:0.341px;">1 – Critical</div>
<div class="t " style="left:1331.30px;top:658.33px;font-size:15.20px;color:#333;letter-spacing:0.168px;">Developed</div>
<div class="t " style="left:1457.30px;top:658.33px;font-size:15.20px;color:#333;letter-spacing:0.147px;">Fred Bloggs</div>
<div class="t " style="left:1709.00px;top:658.33px;font-size:15.20px;color:#333;letter-spacing:0.060px;">Feature</div>
<div class="t " style="left:1834.80px;top:658.33px;font-size:15.20px;color:#333;letter-spacing:-0.300px;">RQ:8</div>
<div class="t u" style="left:1582.70px;top:658.33px;font-size:15.20px;color:#555;letter-spacing:-0.528px;">1.1.0.0.0001</div>
<div class="a" style="left:240.00px;top:725.00px;width:1655.00px;height:1.00px;background:#e6e6e6"></div>
<div class="a" style="left:1201.00px;top:686.00px;width:126.00px;height:39.00px;background:#f37456"></div>
<div class="a" style="left:1201.00px;top:725.00px;width:126.00px;height:1.00px;background:#fbe0d9"></div>
<div class="a" style="left:243.00px;top:697.00px;width:16.00px;height:16.00px;border:1px solid #333;box-sizing:border-box;background:#fff"></div>
<svg class="a" style="left:342.00px;top:696.00px" width="20" height="20" viewBox="0 0 20 20"><path d="M 3 1.5 L 15.8 1.5 L 19.5 5.2 L 19.5 19.5 L 3 19.5 Z" fill="#efefef" stroke="#a8a8a8" stroke-width="1"/><path d="M 15.5 1.5 L 15.5 5.3 L 19.3 5.3" fill="#ddd" stroke="#bbb" stroke-width="0.8"/><path d="M 3 19.2 L 19.3 19.2 L 19.3 5.8" fill="none" stroke="#111" stroke-width="1.6"/><g stroke="#c4c4c4" stroke-width="1"><line x1="4.5" y1="10.8" x2="17.5" y2="10.8"/><line x1="4.5" y1="13.3" x2="17.5" y2="13.3"/><line x1="4.5" y1="15.8" x2="17.5" y2="15.8"/></g><g fill="#2b9bd2"><rect x="4" y="0" width="5.8" height="3.4"/><rect x="6.4" y="3.2" width="1" height="1.9"/><rect x="0" y="4.9" width="6.6" height="3.9"/><rect x="7.2" y="4.9" width="6.8" height="3.9"/></g><g fill="#a6daf0"><rect x="5" y="1.1" width="3.8" height="1.1"/><rect x="1.3" y="6.3" width="4" height="1.1"/><rect x="8.6" y="6.3" width="4" height="1.1"/></g></svg>
<div class="t u" style="left:368.60px;top:698.33px;font-size:15.20px;color:#666;letter-spacing:0.909px;">Ability to associate books with different editions</div>
<div class="a" style="left:915.00px;top:695.50px;width:41.00px;height:20.00px;background:#7ffd7a"></div>
<div class="a" style="left:956.00px;top:695.50px;width:42.00px;height:20.00px;background:#f37456"></div>
<div class="a" style="left:998.00px;top:695.50px;width:42.00px;height:20.00px;background:#dedede"></div>
<div class="a" style="left:1060.00px;top:695.50px;width:125.00px;height:20.00px;background:#7ffd7a"></div>
<div class="t " style="left:1205.00px;top:698.33px;font-size:15.20px;color:#3a2a26;letter-spacing:0.341px;">1 – Critical</div>
<div class="t " style="left:1331.30px;top:698.33px;font-size:15.20px;color:#333;letter-spacing:0.168px;">Developed</div>
<div class="t " style="left:1457.30px;top:698.33px;font-size:15.20px;color:#333;letter-spacing:0.147px;">Fred Bloggs</div>
<div class="t " style="left:1709.00px;top:698.33px;font-size:15.20px;color:#333;letter-spacing:0.060px;">Feature</div>
<div class="t " style="left:1834.80px;top:698.33px;font-size:15.20px;color:#333;letter-spacing:-0.300px;">RQ:9</div>
<div class="t u" style="left:1582.70px;top:698.33px;font-size:15.20px;color:#555;letter-spacing:-0.256px;">1.1.0.0.0002</div>
<div class="a" style="left:240.00px;top:765.00px;width:1655.00px;height:1.00px;background:#e6e6e6"></div>
<div class="a" style="left:1201.00px;top:726.00px;width:126.00px;height:39.00px;background:#f37456"></div>
<div class="a" style="left:1201.00px;top:765.00px;width:126.00px;height:1.00px;background:#fbe0d9"></div>
<div class="a" style="left:243.00px;top:737.00px;width:16.00px;height:16.00px;border:1px solid #333;box-sizing:border-box;background:#fff"></div>
<svg class="a" style="left:342.00px;top:736.00px" width="20" height="20" viewBox="0 0 20 20"><path d="M 3 1.5 L 15.8 1.5 L 19.5 5.2 L 19.5 19.5 L 3 19.5 Z" fill="#efefef" stroke="#a8a8a8" stroke-width="1"/><path d="M 15.5 1.5 L 15.5 5.3 L 19.3 5.3" fill="#ddd" stroke="#bbb" stroke-width="0.8"/><path d="M 3 19.2 L 19.3 19.2 L 19.3 5.8" fill="none" stroke="#111" stroke-width="1.6"/><g stroke="#c4c4c4" stroke-width="1"><line x1="4.5" y1="10.8" x2="17.5" y2="10.8"/><line x1="4.5" y1="13.3" x2="17.5" y2="13.3"/><line x1="4.5" y1="15.8" x2="17.5" y2="15.8"/></g><g fill="#2b9bd2"><rect x="4" y="0" width="5.8" height="3.4"/><rect x="6.4" y="3.2" width="1" height="1.9"/><rect x="0" y="4.9" width="6.6" height="3.9"/><rect x="7.2" y="4.9" width="6.8" height="3.9"/></g><g fill="#a6daf0"><rect x="5" y="1.1" width="3.8" height="1.1"/><rect x="1.3" y="6.3" width="4" height="1.1"/><rect x="8.6" y="6.3" width="4" height="1.1"/></g></svg>
<div class="t u" style="left:368.60px;top:738.33px;font-size:15.20px;color:#666;letter-spacing:0.867px;">Ability to completely erase all books stored in the system with one click</div>
<div class="a" style="left:915.00px;top:735.50px;width:41.00px;height:20.00px;background:#7ffd7a"></div>
<div class="a" style="left:956.00px;top:735.50px;width:42.00px;height:20.00px;background:#f37456"></div>
<div class="a" style="left:998.00px;top:735.50px;width:42.00px;height:20.00px;background:#dedede"></div>
<div class="a" style="left:1060.00px;top:735.50px;width:125.00px;height:20.00px;background:#7ffd7a"></div>
<div class="t " style="left:1205.00px;top:738.33px;font-size:15.20px;color:#3a2a26;letter-spacing:0.341px;">1 – Critical</div>
<div class="t " style="left:1331.30px;top:738.33px;font-size:15.20px;color:#333;letter-spacing:0.168px;">Developed</div>
<div class="t " style="left:1457.30px;top:738.33px;font-size:15.20px;color:#333;letter-spacing:0.147px;">Fred Bloggs</div>
<div class="t " style="left:1709.00px;top:738.33px;font-size:15.20px;color:#333;letter-spacing:0.060px;">Feature</div>
<div class="t " style="left:1834.80px;top:738.33px;font-size:15.20px;color:#333;letter-spacing:-0.300px;">RQ:10</div>
<div class="t u" style="left:1582.70px;top:738.33px;font-size:15.20px;color:#555;letter-spacing:-0.719px;">1.2.0.0</div>
<div class="a" style="left:240.00px;top:805.00px;width:1655.00px;height:1.00px;background:#e6e6e6"></div>
<div class="a" style="left:1201.00px;top:766.00px;width:126.00px;height:39.00px;background:#f37456"></div>
<div class="a" style="left:1201.00px;top:805.00px;width:126.00px;height:1.00px;background:#fbe0d9"></div>
<div class="a" style="left:243.00px;top:777.00px;width:16.00px;height:16.00px;border:1px solid #333;box-sizing:border-box;background:#fff"></div>
<svg class="a" style="left:312.90px;top:783.50px" width="8" height="7.2" viewBox="0 0 8 7.2"><polygon points="0.2,7 7.8,7 7.8,0.2" fill="#333"/></svg>
<svg class="a" style="left:332.30px;top:778.00px" width="19" height="20" viewBox="0 0 19 20"><defs><linearGradient id="dg" x1="0" y1="0" x2="1" y2="1"><stop offset="0" stop-color="#ffffff"/><stop offset="1" stop-color="#dcdcdc"/></linearGradient></defs><rect x="0.6" y="0.6" width="11.2" height="12.4" fill="url(#dg)" stroke="#b4b4b4" stroke-width="1"/><rect x="3.1" y="3.1" width="11.3" height="12.4" fill="url(#dg)" stroke="#9c9c9c" stroke-width="1"/><rect x="6" y="5.3" width="10.9" height="12.5" fill="url(#dg)" stroke="#8a8a8a" stroke-width="1"/><path d="M 6.2 18.1 L 17.3 18.1 L 17.3 5.6" fill="none" stroke="#505050" stroke-width="1.1"/><g stroke="#8f8f8f" stroke-width="0.9"><line x1="7.8" y1="8.2" x2="15.2" y2="8.2"/><line x1="7.8" y1="10.6" x2="15.2" y2="10.6"/><line x1="7.8" y1="13" x2="15.2" y2="13"/><line x1="7.8" y1="15.3" x2="15.2" y2="15.3"/></g></svg>
<div class="t u" style="left:355.80px;top:778.33px;font-size:15.20px;color:#606060;-webkit-text-stroke:0.45px #606060;letter-spacing:0.777px;">Edition Management</div>
<div class="t " style="left:915.00px;top:778.33px;font-size:15.20px;color:#777;-webkit-text-stroke:0.45px #777;letter-spacing:0.523px;">Not Covered</div>
<div class="a" style="left:1060.00px;top:775.50px;width:68.00px;height:20.00px;background:#f37456"></div>
<div class="a" style="left:1128.00px;top:775.50px;width:20.00px;height:20.00px;background:#f5f052"></div>
<div class="a" style="left:1148.00px;top:775.50px;width:37.00px;height:20.00px;background:#dedede"></div>
<div class="t " style="left:1205.00px;top:778.33px;font-size:15.20px;color:#3a2a26;-webkit-text-stroke:0.45px #3a2a26;letter-spacing:0.432px;">1 – Critical</div>
<div class="t " style="left:1331.30px;top:778.33px;font-size:15.20px;color:#333;-webkit-text-stroke:0.45px #333;letter-spacing:0.183px;">In Progress</div>
<div class="t " style="left:1457.30px;top:778.33px;font-size:15.20px;color:#333;-webkit-text-stroke:0.45px #333;letter-spacing:0.207px;">Fred Bloggs</div>
<div class="t " style="left:1709.00px;top:778.33px;font-size:15.20px;color:#333;-webkit-text-stroke:0.45px #333;letter-spacing:-0.021px;">Package</div>
<div class="t " style="left:1834.80px;top:778.33px;font-size:15.20px;color:#333;-webkit-text-stroke:0.45px #333;letter-spacing:-0.300px;">RQ:11</div>
<div class="a" style="left:240.00px;top:845.00px;width:1655.00px;height:1.00px;background:#e6e6e6"></div>
<div class="a" style="left:1201.00px;top:806.00px;width:126.00px;height:39.00px;background:#f37456"></div>
<div class="a" style="left:1201.00px;top:845.00px;width:126.00px;height:1.00px;background:#fbe0d9"></div>
<div class="a" style="left:243.00px;top:817.00px;width:16.00px;height:16.00px;border:1px solid #333;box-sizing:border-box;background:#fff"></div>
<svg class="a" style="left:342.00px;top:816.00px" width="20" height="20" viewBox="0 0 20 20"><path d="M 3 1.5 L 15.8 1.5 L 19.5 5.2 L 19.5 19.5 L 3 19.5 Z" fill="#efefef" stroke="#a8a8a8" stroke-width="1"/><path d="M 15.5 1.5 L 15.5 5.3 L 19.3 5.3" fill="#ddd" stroke="#bbb" stroke-width="0.8"/><path d="M 3 19.2 L 19.3 19.2 L 19.3 5.8" fill="none" stroke="#111" stroke-width="1.6"/><g stroke="#c4c4c4" stroke-width="1"><line x1="4.5" y1="10.8" x2="17.5" y2="10.8"/><line x1="4.5" y1="13.3" x2="17.5" y2="13.3"/><line x1="4.5" y1="15.8" x2="17.5" y2="15.8"/></g><g fill="#2b9bd2"><rect x="4" y="0" width="5.8" height="3.4"/><rect x="6.4" y="3.2" width="1" height="1.9"/><rect x="0" y="4.9" width="6.6" height="3.9"/><rect x="7.2" y="4.9" width="6.8" height="3.9"/></g><g fill="#a6daf0"><rect x="5" y="1.1" width="3.8" height="1.1"/><rect x="1.3" y="6.3" width="4" height="1.1"/><rect x="8.6" y="6.3" width="4" height="1.1"/></g></svg>
<div class="t u" style="left:368.60px;top:818.33px;font-size:15.20px;color:#666;letter-spacing:0.948px;">Ability to create different editions</div>
<div class="t " style="left:915.00px;top:818.33px;font-size:15.20px;color:#777;letter-spacing:0.473px;">Not Covered</div>
<div class="a" style="left:1060.00px;top:815.50px;width:68.00px;height:20.00px;background:#f37456"></div>
<div class="a" style="left:1128.00px;top:815.50px;width:20.00px;height:20.00px;background:#f5f052"></div>
<div class="a" style="left:1148.00px;top:815.50px;width:37.00px;height:20.00px;background:#dedede"></div>
<div class="t " style="left:1205.00px;top:818.33px;font-size:15.20px;color:#3a2a26;letter-spacing:0.341px;">1 – Critical</div>
<div class="t " style="left:1331.30px;top:818.33px;font-size:15.20px;color:#333;letter-spacing:0.033px;">In Progress</div>
<div class="t " style="left:1457.30px;top:818.33px;font-size:15.20px;color:#333;letter-spacing:0.147px;">Fred Bloggs</div>
<div class="t " style="left:1709.00px;top:818.33px;font-size:15.20px;color:#333;letter-spacing:0.060px;">Feature</div>
<div class="t " style="left:1834.80px;top:818.33px;font-size:15.20px;color:#333;letter-spacing:-0.300px;">RQ:12</div>
<div class="t u" style="left:1582.70px;top:818.33px;font-size:15.20px;color:#555;letter-spacing:0.263px;">1.0.0.0.0003</div>
</body></html>
